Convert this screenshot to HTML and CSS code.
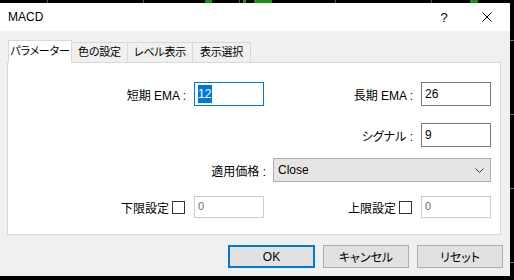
FILE: index.html
```html
<!DOCTYPE html>
<html lang="ja">
  <head>
    <meta charset="UTF-8" />
    <title>MACD</title>
    <link rel="stylesheet" href="styles.css">
  </head>
  <body>
    <div class="chart-top"></div>
    <div class="screen">
      <div class="dialog">
        <div class="titlebar">
          <span class="title">MACD</span>
          <span class="title-btn help">?</span>
          <span class="title-btn close">
            <svg width="10" height="10" viewBox="0 0 10 10">
              <path d="M0.5 0.5 L9.5 9.5 M9.5 0.5 L0.5 9.5" stroke="#000" stroke-width="1" />
            </svg>
          </span>
        </div>

        <div class="dialog-body">
          <div class="tabs">
            <div class="tab active" style="width: 64px">パラメーター</div>
            <div class="tab" style="width: 57px">色の設定</div>
            <div class="tab" style="width: 66px">レベル表示</div>
            <div class="tab" style="width: 59px">表示選択</div>
          </div>

          <div class="panel">
            <!-- EMA -->
            <div class="row row-ema">
              <label class="lbl">短期 EMA :</label>
              <div class="field focus"><span class="selected">12</span></div>
              <label class="lbl">長期 EMA :</label>
              <div class="field">26</div>
            </div>

            <div class="row row-signal">
              <label class="lbl col-3">シグナル :</label>
              <div class="field">9</div>
            </div>

            <!-- 適用価格 -->
            <div class="row row-price">
              <label class="lbl span-2">適用価格 :</label>
              <div class="select span-2">
                <span>Close</span>
                <svg width="9" height="5" viewBox="0 0 9 5">
                  <polyline points="0.5,0.5 4.5,4.5 8.5,0.5" fill="none" stroke="#333" stroke-width="1" />
                </svg>
              </div>
            </div>

            <!-- 上下限 -->
            <div class="row row-limit">
              <label class="lbl">下限設定<span class="check"></span></label>
              <div class="field disabled">0</div>
              <label class="lbl">上限設定<span class="check"></span></label>
              <div class="field disabled">0</div>
            </div>
          </div>

          <div class="buttons">
            <button class="btn btn-default" style="width: 87px">OK</button>
            <button class="btn" style="width: 86px">キャンセル</button>
            <button class="btn" style="width: 86px">リセット</button>
          </div>
        </div>
      </div>
      <div class="chart-side"></div>
    </div>
  </body>
</html>
```

FILE: styles.css
```css
body {
  margin: 0;
  width: 514px;
  height: 280px;
  overflow: hidden;
  background-color: #000;
  font-family: "Liberation Sans", "Noto Sans CJK JP", sans-serif;
  font-size: 12px;
  font-feature-settings: "palt";
  color: #000;
}

.chart-top {
  height: 3px;
  background:
    linear-gradient(90deg, transparent 205px, #1e8a1e 205px, #1e8a1e 212px, transparent 212px,
      transparent 243px, #1e8a1e 243px, #1e8a1e 246px, transparent 246px,
      transparent 254px, #1e8a1e 254px, #1e8a1e 272px, transparent 272px,
      transparent 470px, #1e8a1e 470px, #1e8a1e 478px, transparent 478px),
    repeating-linear-gradient(90deg, transparent 0, transparent 47px, #5a5a5a 47px, #5a5a5a 48px, transparent 48px, transparent 96px);
}

.screen {
  display: flex;
}

.chart-side {
  width: 4px;
  height: 273px;
  background: repeating-linear-gradient(180deg, transparent 0, transparent 37px, #6a6a6a 37px, #6a6a6a 38px, transparent 38px, transparent 74px);
}

.dialog {
  width: 510px;
  height: 273px;
  background-color: #f0f0f0;
  display: flex;
  flex-direction: column;
}

.titlebar {
  height: 28px;
  background-color: #fff;
  display: flex;
  align-items: center;
  flex-shrink: 0;
}

.title {
  padding-left: 8px;
  flex: 1;
}

.title-btn {
  width: 46px;
  height: 28px;
  display: flex;
  align-items: center;
  justify-content: center;
}

.help {
  font-size: 13px;
  padding-left: 6px;
  box-sizing: border-box;
}

.dialog-body {
  padding: 9px 7px 0 7px;
}

.tabs {
  display: flex;
  align-items: flex-end;
  height: 22px;
  padding-left: 1px;
}

.tab {
  height: 20px;
  box-sizing: border-box;
  border: 1px solid #d9d9d9;
  border-bottom: none;
  background-color: #f0f0f0;
  margin-left: -1px;
  text-align: center;
  line-height: 18px;
  font-size: 11px;
  letter-spacing: -0.2px;
  white-space: nowrap;
}

.tab:first-child {
  margin-left: 0;
}

.tab.active {
  height: 23px;
  margin-bottom: -1px;
  background-color: #fff;
  position: relative;
  z-index: 1;
  line-height: 21px;
}

.panel {
  height: 173px;
  box-sizing: border-box;
  margin-right: 2px;
  background-color: #fff;
  border: 1px solid #d9d9d9;
  padding: 19px 9px 0 0;
}

.row {
  display: grid;
  grid-template-columns: 178px 70px 141px 70px;
  column-gap: 8px;
  align-items: center;
}

.row-signal {
  margin-top: 17px;
}

.row-price {
  margin-top: 11px;
}

.row-limit {
  margin-top: 14px;
}

.lbl {
  text-align: right;
  white-space: nowrap;
  display: flex;
  align-items: center;
  justify-content: flex-end;
}

.col-3 {
  grid-column: 3;
}

.span-2 {
  grid-column: span 2;
}

.row-price .lbl {
  margin-right: -2px;
}

.field {
  height: 24px;
  box-sizing: border-box;
  border: 1px solid #7a7a7a;
  background-color: #fff;
  padding: 0 3px;
  line-height: 22px;
}

.field.focus {
  border-color: #0078d7;
}

.selected {
  background-color: #0078d7;
  color: #fff;
  padding: 2px 1px 2px 0;
}

.field.disabled {
  height: 22px;
  border-color: #cccccc;
  color: #6d6d6d;
  line-height: 18px;
  font-size: 11px;
}

.check {
  width: 11px;
  height: 11px;
  border: 1px solid #333;
  background-color: #fff;
  margin-left: 3px;
  margin-right: 1px;
}

.select {
  height: 24px;
  box-sizing: border-box;
  margin-left: 1px;
  border: 1px solid #adadad;
  background-color: #e5e5e5;
  display: flex;
  align-items: center;
  justify-content: space-between;
  padding: 0 6px 0 4px;
}

.buttons {
  display: flex;
  justify-content: flex-end;
  gap: 8px;
  margin-top: 10px;
}

.btn {
  height: 23px;
  box-sizing: border-box;
  border: 1px solid #adadad;
  background-color: #e1e1e1;
  font-family: inherit;
  font-size: 12px;
  font-feature-settings: "palt";
  padding: 0;
  color: #000;
}

.btn-default {
  border: 2px solid #0078d7;
}
```
